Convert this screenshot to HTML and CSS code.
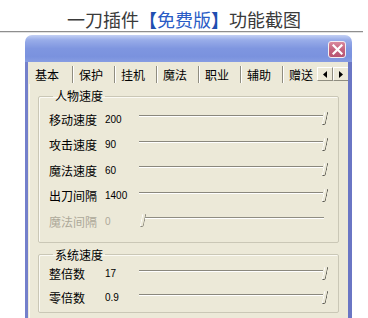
FILE: index.html
```html
<!DOCTYPE html>
<html lang="zh">
<head>
<meta charset="utf-8">
<link rel="stylesheet" href="styles.css">
</head>
<body>
<div class="page">
  <h1 class="headline">一刀插件<span class="br">【</span><span class="blue">免费版</span><span class="br">】</span>功能截图</h1>
  <div class="rule"></div>
  <div class="window">
    <div class="titlebar">
      <div class="close">
        <svg width="11" height="11" viewBox="0 0 11 11"><path d="M1.5 1.5 L9.5 9.5 M9.5 1.5 L1.5 9.5" stroke="#fff" stroke-width="2.2" stroke-linecap="square"/></svg>
      </div>
    </div>
    <div class="client">
      <div class="tabs">
        <div class="tab first">基本</div>
        <div class="tab">保护</div>
        <div class="tab">挂机</div>
        <div class="tab">魔法</div>
        <div class="tab">职业</div>
        <div class="tab">辅助</div>
        <div class="tab last">赠送</div>
        <div class="scroller">
          <div class="sbtn"><svg width="4" height="7" viewBox="0 0 4 7"><path d="M4 0 L0 3.5 L4 7 Z" fill="#000"/></svg></div>
          <div class="sbtn"><svg width="4" height="7" viewBox="0 0 4 7"><path d="M0 0 L4 3.5 L0 7 Z" fill="#000"/></svg></div>
        </div>
      </div>
      <div class="panel">
        <fieldset class="group g1">
          <legend>人物速度</legend>
          <div class="row"><span class="lbl">移动速度</span><span class="val">200</span><div class="slider max"><div class="track"></div><div class="thumb"></div></div></div>
          <div class="row"><span class="lbl">攻击速度</span><span class="val">90</span><div class="slider max"><div class="track"></div><div class="thumb"></div></div></div>
          <div class="row"><span class="lbl">魔法速度</span><span class="val">60</span><div class="slider max"><div class="track"></div><div class="thumb"></div></div></div>
          <div class="row"><span class="lbl">出刀间隔</span><span class="val">1400</span><div class="slider max"><div class="track"></div><div class="thumb"></div></div></div>
          <div class="row disabled"><span class="lbl">魔法间隔</span><span class="val">0</span><div class="slider min"><div class="thumb"></div><div class="track"></div></div></div>
        </fieldset>
        <fieldset class="group g2">
          <legend>系统速度</legend>
          <div class="row"><span class="lbl">整倍数</span><span class="val">17</span><div class="slider max"><div class="track"></div><div class="thumb"></div></div></div>
          <div class="row"><span class="lbl">零倍数</span><span class="val">0.9</span><div class="slider max"><div class="track"></div><div class="thumb"></div></div></div>
        </fieldset>
      </div>
    </div>
  </div>
</div>
</body>
</html>
```
FILE: styles.css
```css
* { box-sizing: border-box; }
html, body { margin: 0; padding: 0; background: #fff; }
body { width: 368px; height: 318px; overflow: hidden; font-family: "Noto Sans CJK SC", "Noto Sans", sans-serif; }

.headline {
  margin: 0;
  height: 31px;
  padding-top: 7px;
  font-size: 18px;
  line-height: 24px;
  font-weight: normal;
  color: #3a3a3a;
  text-align: center;
  white-space: nowrap;
}
.headline .blue { color: #2a5cc6; }
.headline .br { color: #1f4fb0; font-weight: bold; }

.rule {
  height: 2px;
  border-top: 1px solid #8e8e8e;
  border-bottom: 1px solid #e2e2e2;
  margin-right: 5px;
}

.window {
  margin: 2px 16px 0 25px;
  height: 283px;
  display: flex;
  flex-direction: column;
}
.titlebar {
  height: 27px;
  flex: none;
  border-radius: 7px 7px 0 0;
  background: linear-gradient(to bottom, #c3d0f4 0%, #99ade9 18%, #7f96e0 50%, #7a92de 80%, #879de2 100%);
  display: flex;
  justify-content: flex-end;
  align-items: flex-start;
  padding: 6px 6px 0 0;
}
.close {
  width: 18px;
  height: 17px;
  border: 1px solid #f4eef2;
  border-radius: 3px;
  background: linear-gradient(to bottom, #d9899d 0%, #c5647f 50%, #b75472 100%);
  display: flex;
  align-items: center;
  justify-content: center;
}

.client {
  flex: 1;
  min-height: 0;
  overflow: hidden;
  background: #ece9d8;
  border-left: 3px solid #7480cb;
  border-right: 4px solid #6a76c4;
  display: flex;
  flex-direction: column;
}

.tabs {
  height: 22px;
  flex: none;
  display: flex;
  align-items: flex-start;
  padding: 4px 0 0 1px;
  font-size: 12px;
  line-height: 16px;
  color: #000;
}
.tab {
  padding: 1px 11px 0 5px;
  height: 17px;
  border-right: 1px solid #8f8d80;
  box-shadow: 1px 0 0 #fff;
  margin-right: 1px;
  white-space: nowrap;
}
.tab.first { padding-left: 6px; padding-right: 13px; }
.tab.last { border-right: none; box-shadow: none; padding-right: 3px; }
.scroller {
  display: flex;
  margin-top: 1px;
}
.sbtn {
  width: 16px;
  height: 14px;
  display: flex;
  align-items: center;
  justify-content: center;
  border-bottom: 1px solid #8f8d80;
  border-right: 1px solid #8f8d80;
  border-top: 1px solid #fff;
  border-left: 1px solid #fff;
}

.panel {
  flex: 1;
  padding: 5px 9px 0 8px;
  border-left: 1px solid #fbfaf5;
  margin-left: 1px;
}

.group {
  margin: 0;
  padding: 0 10px;
  border: 1px solid #cac7b6;
  border-radius: 2px;
  box-shadow: inset 1px 1px 0 #fbfaf4;
  min-width: 0;
}
.group legend {
  font-size: 12px;
  line-height: 14px;
  padding: 0 2px;
  margin-left: 4px;
  color: #000;
}
.g1 { padding-top: 4px; padding-bottom: 7px; }
.g2 { margin-top: 5px; padding-top: 0; padding-bottom: 2px; }

.row {
  display: grid;
  grid-template-columns: 56px 34px 1fr;
  height: 25.5px;
  align-items: center;
  font-size: 12px;
  color: #000;
}
.g2 .row { height: 24px; }
.lbl { line-height: 14px; white-space: nowrap; }
.val { font-family: "Liberation Sans", Arial, sans-serif; font-size: 10px; line-height: 12px; }
.row.disabled { color: #aca899; }

.slider {
  height: 100%;
  display: flex;
  align-items: flex-start;
  padding-top: 5px;
  padding-right: 1px;
}
.track {
  flex: 1;
  height: 2px;
  border-top: 1px solid #8a887d;
  border-bottom: 1px solid #fff;
  margin-top: 3px;
}
.thumb {
  width: 4px;
  height: 13px;
  border-left: 1px solid #fff;
  border-right: 1px solid #5b5a52;
  border-bottom: 1px solid #5b5a52;
  border-radius: 0 0 2px 0;
  transform: skewX(-12deg);
  background: #ece9d8;
}
.slider.min { padding-left: 2px; }
.slider.min .track { margin-right: 3px; border-top-color: #8f8d82; }
.slider.min .thumb { border-right-color: #8a887d; border-bottom-color: #8a887d; }
```
